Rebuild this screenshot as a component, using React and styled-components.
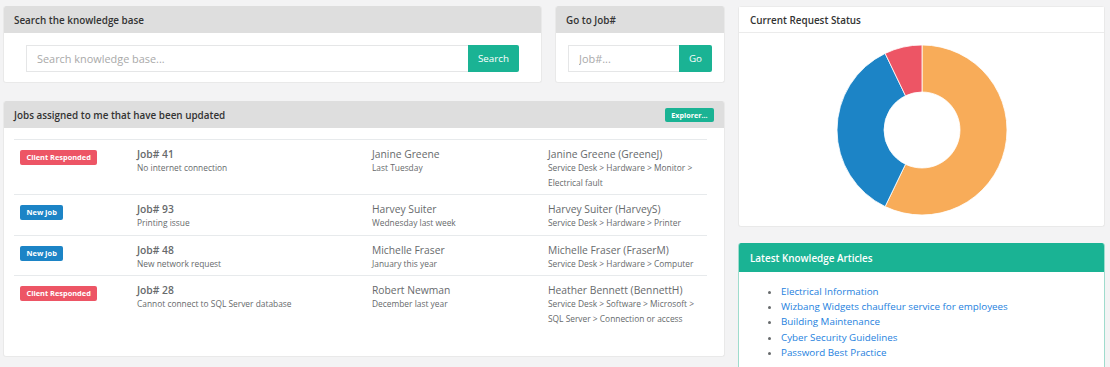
import React from "react";
import styled, { createGlobalStyle } from "styled-components";

const Global = createGlobalStyle`
  html, body { margin: 0; padding: 0; overflow: hidden; background: #f3f3f4; }
  body { font-family: "Open Sans", "Liberation Sans", sans-serif; color: #676a6c; }
  * { box-sizing: border-box; }
`;

const Page = styled.div`
  display: grid;
  grid-template-columns: 722px 367px;
  column-gap: 13px;
  padding: 6px 5px 0 3px;
  align-items: start;
`;

const Column = styled.div`
  display: flex;
  flex-direction: column;
  gap: ${(p) => p.$gap}px;
`;

const TopRow = styled.div`
  display: grid;
  grid-template-columns: 539px 170px;
  column-gap: 13px;
`;

const Panel = styled.section`
  background: #fff;
  border-radius: 3px;
  border: 1px solid ${(p) => (p.$accent ? "#9fdccd" : "#e9e9e9")};
  border-top: none;
  overflow: hidden;
`;

const PanelHeader = styled.header`
  height: ${(p) => p.$h || 27}px;
  display: flex;
  align-items: center;
  justify-content: space-between;
  padding: 0 11px 0 ${(p) => p.$pl || 11}px;
  background: ${(p) =>
    p.$variant === "green" ? "#1ab394" : p.$variant === "white" ? "#fff" : "#dedede"};
  border-bottom: 1px solid
    ${(p) => (p.$variant === "white" ? "#ebebeb" : "transparent")};
  border-top: 1px solid
    ${(p) => (p.$variant === "white" ? "#ebebeb" : "transparent")};
  margin: 0 -1px;
`;

const PanelTitle = styled.h5`
  margin: 0;
  font-size: 9.9px;
  font-weight: 600;
  color: ${(p) => (p.$light ? "#ffffff" : "#333333")};
`;

const PanelBody = styled.div`
  padding: ${(p) => p.$pad};
`;

const InputGroup = styled.div`
  display: flex;
  height: 27px;
`;

const TextInput = styled.input`
  flex: 1;
  min-width: 0;
  border: 1px solid #e5e6e7;
  border-right: none;
  padding: 0 10px;
  font-family: "Open Sans", sans-serif;
  font-size: 10.9px;
  color: #676a6c;
  outline: none;
  &::placeholder { color: #a9a9a9; }
`;

const GreenButton = styled.button`
  width: ${(p) => p.$w}px;
  border: none;
  background: #1ab394;
  color: #fff;
  font-family: "Open Sans", sans-serif;
  font-size: 9.8px;
  border-radius: 0 2px 2px 0;
  padding: 0;
`;

const SmallButton = styled.button`
  height: 14px;
  width: 49px;
  border: none;
  background: #1ab394;
  color: #fff;
  border-radius: 2px;
  font-family: "Open Sans", sans-serif;
  font-size: 7.2px;
  font-weight: 700;
  padding: 0;
`;

const Table = styled.table`
  width: 693px;
  table-layout: fixed;
  border-collapse: collapse;
`;

const Row = styled.tr`
  border-top: 1px solid #e7eaec;
`;

const Cell = styled.td`
  vertical-align: top;
  padding: 7px 6px 4px;
  width: ${(p) => p.$w}px;
`;

const Badge = styled.span`
  display: block;
  width: fit-content;
  margin-top: 3px;
  height: 15px;
  line-height: 15px;
  padding: 0 6.5px;
  border-radius: 2px;
  font-size: 7.4px;
  font-weight: 700;
  color: #fff;
  background: ${(p) => (p.$kind === "new" ? "#1c84c6" : "#ed5565")};
  white-space: nowrap;
`;

const MainLine = styled.div`
  font-size: 10.3px;
  line-height: 14px;
  font-weight: ${(p) => (p.$strong ? 600 : 400)};
  color: #676a6c;
`;

const SubLine = styled.div`
  font-size: 8.4px;
  line-height: 14.5px;
  color: #676a6c;
`;

const ChartWrap = styled.div`
  display: flex;
  justify-content: center;
  padding: 11px 0 10px;
`;

const ArticleList = styled.ul`
  margin: 0;
  padding: 0 0 0 30px;
  list-style: disc;
  color: #676a6c;
  font-size: 9.8px;
  line-height: 15.2px;
`;

const ArticleLink = styled.a`
  color: #1e7fde;
  text-decoration: none;
`;

const jobs = [
  {
    status: "Client Responded",
    kind: "client",
    job: "Job# 41",
    title: "No internet connection",
    who: "Janine Greene",
    when: "Last Tuesday",
    owner: "Janine Greene (GreeneJ)",
    path: "Service Desk > Hardware > Monitor > Electrical fault",
  },
  {
    status: "New Job",
    kind: "new",
    job: "Job# 93",
    title: "Printing issue",
    who: "Harvey Suiter",
    when: "Wednesday last week",
    owner: "Harvey Suiter (HarveyS)",
    path: "Service Desk > Hardware > Printer",
  },
  {
    status: "New Job",
    kind: "new",
    job: "Job# 48",
    title: "New network request",
    who: "Michelle Fraser",
    when: "January this year",
    owner: "Michelle Fraser (FraserM)",
    path: "Service Desk > Hardware > Computer",
  },
  {
    status: "Client Responded",
    kind: "client",
    job: "Job# 28",
    title: "Cannot connect to SQL Server database",
    who: "Robert Newman",
    when: "December last year",
    owner: "Heather Bennett (BennettH)",
    path: "Service Desk > Software > Microsoft > SQL Server > Connection or access",
  },
];

const articles = [
  "Electrical Information",
  "Wizbang Widgets chauffeur service for employees",
  "Building Maintenance",
  "Cyber Security Guidelines",
  "Password Best Practice",
];

function arcPath(cx, cy, R, r, a0, a1) {
  const pt = (rad, a) => [cx + rad * Math.sin(a), cy - rad * Math.cos(a)];
  const large = a1 - a0 > Math.PI ? 1 : 0;
  const [x0, y0] = pt(R, a0);
  const [x1, y1] = pt(R, a1);
  const [x2, y2] = pt(r, a1);
  const [x3, y3] = pt(r, a0);
  return `M${x0} ${y0} A${R} ${R} 0 ${large} 1 ${x1} ${y1} L${x2} ${y2} A${r} ${r} 0 ${large} 0 ${x3} ${y3} Z`;
}

function Donut() {
  const data = [
    { v: 8, c: "#f8ac59" },
    { v: 5, c: "#1c84c6" },
    { v: 1, c: "#ed5565" },
  ];
  const total = data.reduce((s, d) => s + d.v, 0);
  let a = 0;
  return (
    <svg width="172" height="172" viewBox="0 0 172 172">
      {data.map((d, i) => {
        const a0 = a;
        const a1 = a + (d.v / total) * Math.PI * 2;
        a = a1;
        return (
          <path
            key={i}
            d={arcPath(86, 86, 85, 38, a0, a1)}
            fill={d.c}
            stroke="#fff"
            strokeWidth="0.8"
          />
        );
      })}
    </svg>
  );
}

export default function App() {
  return (
    <>
      <Global />
      <Page>
        <Column $gap={18}>
          <TopRow>
            <Panel>
              <PanelHeader>
                <PanelTitle>Search the knowledge base</PanelTitle>
              </PanelHeader>
              <PanelBody $pad="12px 22px 10px 22px">
                <InputGroup>
                  <TextInput placeholder="Search knowledge base..." />
                  <GreenButton $w={51}>Search</GreenButton>
                </InputGroup>
              </PanelBody>
            </Panel>
            <Panel>
              <PanelHeader>
                <PanelTitle>Go to Job#</PanelTitle>
              </PanelHeader>
              <PanelBody $pad="12px 12px 10px 12px">
                <InputGroup>
                  <TextInput placeholder="Job#..." />
                  <GreenButton $w={33}>Go</GreenButton>
                </InputGroup>
              </PanelBody>
            </Panel>
          </TopRow>
          <Panel>
            <PanelHeader>
              <PanelTitle>Jobs assigned to me that have been updated</PanelTitle>
              <SmallButton>Explorer...</SmallButton>
            </PanelHeader>
            <PanelBody $pad="11px 17px 26px 10px">
              <Table>
                <tbody>
                  {jobs.map((j) => (
                    <Row key={j.job}>
                      <Cell $w={117}>
                        <Badge $kind={j.kind}>{j.status}</Badge>
                      </Cell>
                      <Cell $w={235}>
                        <MainLine $strong>{j.job}</MainLine>
                        <SubLine>{j.title}</SubLine>
                      </Cell>
                      <Cell $w={176}>
                        <MainLine>{j.who}</MainLine>
                        <SubLine>{j.when}</SubLine>
                      </Cell>
                      <Cell $w={165}>
                        <MainLine>{j.owner}</MainLine>
                        <SubLine>{j.path}</SubLine>
                      </Cell>
                    </Row>
                  ))}
                </tbody>
              </Table>
            </PanelBody>
          </Panel>
        </Column>
        <Column $gap={16}>
          <Panel>
            <PanelHeader $variant="white" $pl={12}>
              <PanelTitle>Current Request Status</PanelTitle>
            </PanelHeader>
            <ChartWrap>
              <Donut />
            </ChartWrap>
          </Panel>
          <Panel $accent>
            <PanelHeader $variant="green" $h={29} $pl={12}>
              <PanelTitle $light>Latest Knowledge Articles</PanelTitle>
            </PanelHeader>
            <PanelBody $pad="12px 12px 16px 12px">
              <ArticleList>
                {articles.map((t) => (
                  <li key={t}>
                    <ArticleLink href="#">{t}</ArticleLink>
                  </li>
                ))}
              </ArticleList>
            </PanelBody>
          </Panel>
        </Column>
      </Page>
    </>
  );
}
